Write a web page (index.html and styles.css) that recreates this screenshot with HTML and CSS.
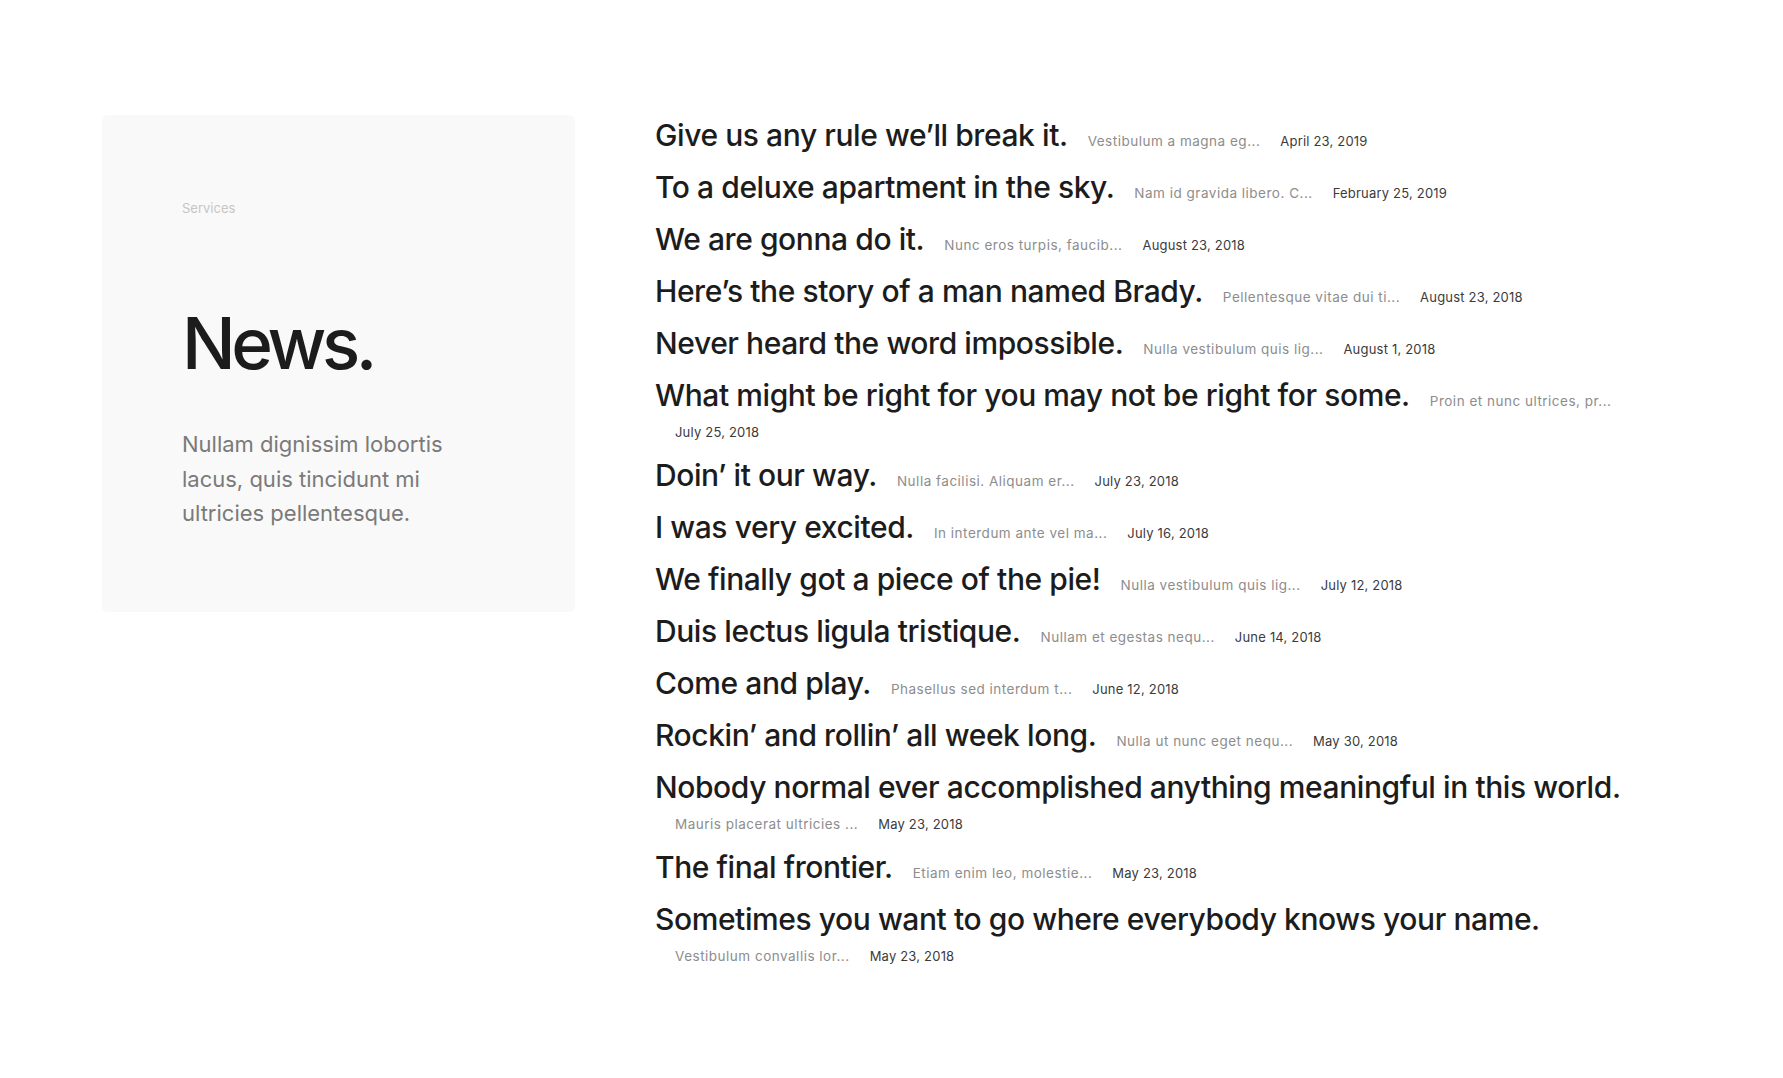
FILE: index.html
```html
<!DOCTYPE html>
<html lang="en">
<head>
<meta charset="utf-8">
<title>News.</title>
<link rel="stylesheet" href="styles.css">
</head>
<body>
<main class="page">
  <aside class="intro">
    <div class="eyebrow">Services</div>
    <h1 class="intro-title">News.</h1>
    <p class="intro-text">Nullam dignissim lobortis lacus, quis tincidunt mi ultricies pellentesque.</p>
  </aside>
  <section class="news">
    <article class="row"><h2 class="title">Give us any rule we’ll break it.</h2><span class="excerpt">Vestibulum a magna eg...</span><span class="date">April 23, 2019</span></article>
    <article class="row"><h2 class="title">To a deluxe apartment in the sky.</h2><span class="excerpt">Nam id gravida libero. C...</span><span class="date">February 25, 2019</span></article>
    <article class="row"><h2 class="title">We are gonna do it.</h2><span class="excerpt">Nunc eros turpis, faucib...</span><span class="date">August 23, 2018</span></article>
    <article class="row"><h2 class="title">Here’s the story of a man named Brady.</h2><span class="excerpt">Pellentesque vitae dui ti...</span><span class="date">August 23, 2018</span></article>
    <article class="row"><h2 class="title">Never heard the word impossible.</h2><span class="excerpt">Nulla vestibulum quis lig...</span><span class="date">August 1, 2018</span></article>
    <article class="row"><h2 class="title">What might be right for you may not be right for some.</h2><span class="excerpt">Proin et nunc ultrices, pr...</span><span class="date">July 25, 2018</span></article>
    <article class="row"><h2 class="title">Doin’ it our way.</h2><span class="excerpt">Nulla facilisi. Aliquam er...</span><span class="date">July 23, 2018</span></article>
    <article class="row"><h2 class="title">I was very excited.</h2><span class="excerpt">In interdum ante vel ma...</span><span class="date">July 16, 2018</span></article>
    <article class="row"><h2 class="title">We finally got a piece of the pie!</h2><span class="excerpt">Nulla vestibulum quis lig...</span><span class="date">July 12, 2018</span></article>
    <article class="row"><h2 class="title">Duis lectus ligula tristique.</h2><span class="excerpt">Nullam et egestas nequ...</span><span class="date">June 14, 2018</span></article>
    <article class="row"><h2 class="title">Come and play.</h2><span class="excerpt">Phasellus sed interdum t...</span><span class="date">June 12, 2018</span></article>
    <article class="row"><h2 class="title">Rockin’ and rollin’ all week long.</h2><span class="excerpt">Nulla ut nunc eget nequ...</span><span class="date">May 30, 2018</span></article>
    <article class="row"><h2 class="title">Nobody normal ever accomplished anything meaningful in this world.</h2><span class="excerpt">Mauris placerat ultricies ...</span><span class="date">May 23, 2018</span></article>
    <article class="row"><h2 class="title">The final frontier.</h2><span class="excerpt">Etiam enim leo, molestie...</span><span class="date">May 23, 2018</span></article>
    <article class="row"><h2 class="title">Sometimes you want to go where everybody knows your name.</h2><span class="excerpt">Vestibulum convallis lor...</span><span class="date">May 23, 2018</span></article>
  </section>
</main>
</body>
</html>
```
FILE: styles.css
```css
html, body {
  margin: 0;
  padding: 0;
  background: #ffffff;
}

body {
  font-family: "Inter", "Noto Sans", sans-serif;
  color: #1c1c1c;
}

.page {
  display: flex;
  align-items: flex-start;
  gap: 80px;
  padding: 113px 102px 60px 102px;
}

/* Left intro card */
.intro {
  flex: 0 0 473px;
  box-sizing: border-box;
  margin-top: 2px;
  padding: 81px 80px 81px 80px;
  background: #f9f9f9;
  border-radius: 5px;
}

.eyebrow {
  font-size: 13px;
  line-height: 24px;
  color: #c6c6c6;
}

.intro-title {
  margin: 88px 0 0 0;
  font-size: 71px;
  line-height: 71px;
  font-weight: 500;
  letter-spacing: -4.4px;
  color: #1c1c1c;
}

.intro-text {
  margin: 48px 0 0 0;
  font-size: 22px;
  line-height: 34.6px;
  color: #7a7a7a;
}

/* News list */
.news {
  flex: 1 1 auto;
  min-width: 0;
}

.row {
  display: flex;
  flex-wrap: wrap;
  align-items: baseline;
  margin: 0 0 7px 0;
  font-size: 13px;
  line-height: 28px;
}

.title {
  margin: 0;
  font-size: 30px;
  line-height: 45px;
  font-weight: 500;
  letter-spacing: -0.42px;
  color: #1c1c1c;
  white-space: nowrap;
}

.excerpt {
  margin-left: 20px;
  font-size: 13.5px;
  letter-spacing: 0.5px;
  color: #8d8d8d;
  white-space: nowrap;
}

.date {
  margin-left: 20px;
  font-size: 13px;
  letter-spacing: 0.2px;
  color: #3b3b3b;
  white-space: nowrap;
}
```
